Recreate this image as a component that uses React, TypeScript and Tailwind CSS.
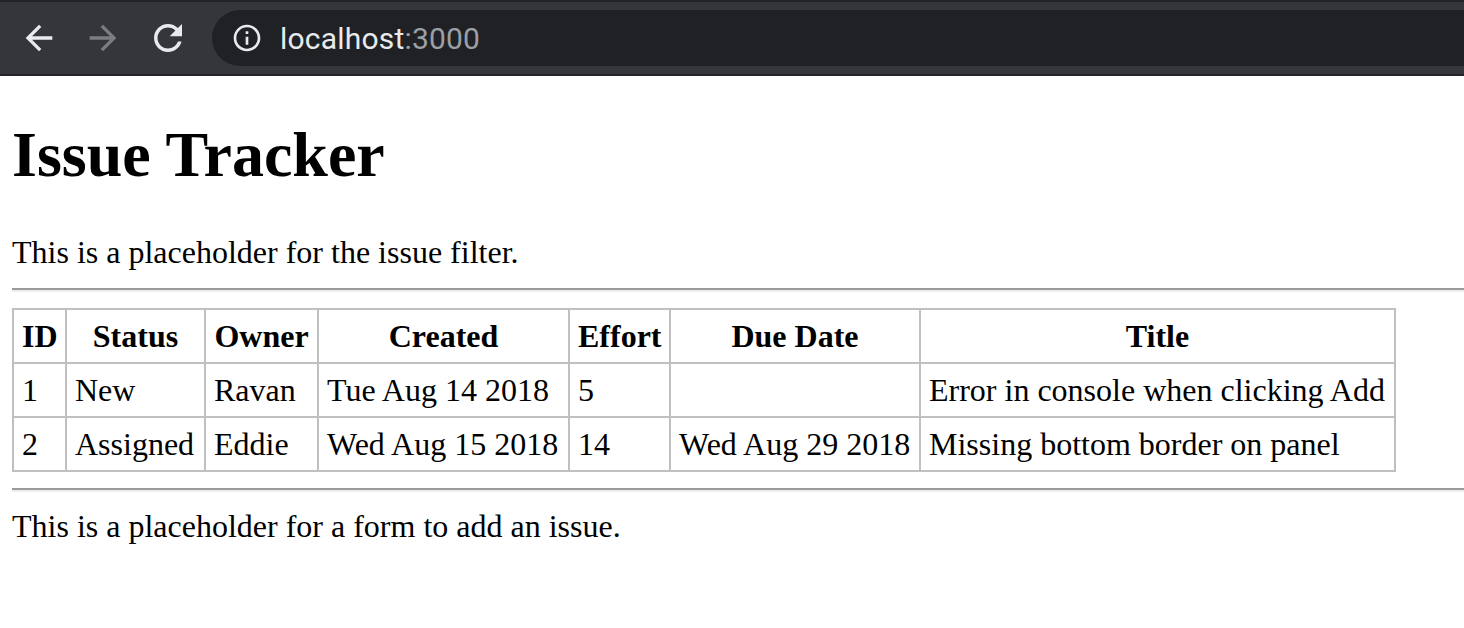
import React from "react";

const serif = { fontFamily: '"Liberation Serif", "Times New Roman", serif' };

function BackIcon() {
  return (
    <svg width="40" height="40" viewBox="0 0 24 24" className="shrink-0">
      <path fill="#e8eaed" d="M20 11H7.83l5.59-5.59L12 4l-8 8 8 8 1.41-1.41L7.83 13H20v-2z" />
    </svg>
  );
}
function ForwardIcon() {
  return (
    <svg width="40" height="40" viewBox="0 0 24 24" className="shrink-0">
      <path fill="#7c7d80" d="M12 4l-1.41 1.41L16.17 11H4v2h12.17l-5.58 5.59L12 20l8-8z" />
    </svg>
  );
}
function ReloadIcon() {
  return (
    <svg width="42" height="42" viewBox="0 0 24 24" className="shrink-0">
      <path
        fill="#e8eaed"
        d="M17.65 6.35C16.2 4.9 14.21 4 12 4c-4.42 0-7.99 3.58-7.99 8s3.57 8 7.99 8c3.73 0 6.84-2.55 7.73-6h-2.08c-.82 2.33-3.04 4-5.65 4-3.31 0-6-2.69-6-6s2.69-6 6-6c1.66 0 3.14.69 4.22 1.78L13 11h7V4l-2.35 2.35z"
      />
    </svg>
  );
}
function InfoIcon() {
  return (
    <svg width="32" height="32" viewBox="0 0 24 24" className="shrink-0">
      <path
        fill="#e8eaed"
        d="M11 7h2v2h-2zm0 4h2v6h-2zm1-9C6.48 2 2 6.48 2 12s4.48 10 10 10 10-4.48 10-10S17.52 2 12 2zm0 18c-4.41 0-8-3.59-8-8s3.59-8 8-8 8 3.59 8 8-3.59 8-8 8z"
      />
    </svg>
  );
}

const issues = [
  { id: 1, status: "New", owner: "Ravan", created: "Tue Aug 14 2018", effort: "5", due: "", title: "Error in console when clicking Add" },
  { id: 2, status: "Assigned", owner: "Eddie", created: "Wed Aug 15 2018", effort: "14", due: "Wed Aug 29 2018", title: "Missing bottom border on panel" },
];

const th = "border-2 border-[#c0c0c0] px-[8px] py-[8px] font-bold text-center leading-[36px]";
const td = "border-2 border-[#c0c0c0] px-[8px] py-[8px] text-left leading-[36px] whitespace-nowrap";

export default function App() {
  return (
    <div className="min-h-screen w-full bg-white overflow-hidden">
      <div className="h-[76px] bg-[#35363a] border-t-2 border-b-2 border-[#232427] flex items-center">
        <div className="flex items-center pl-[19px] gap-[24px]">
          <BackIcon />
          <ForwardIcon />
          <ReloadIcon />
        </div>
        <div className="ml-[23px] flex-1 h-[56px] rounded-l-[28px] bg-[#202124] flex items-center pl-[19px]">
          <InfoIcon />
          <span
            className="ml-[17px] text-[30px] text-[#e8eaed] tracking-[0.2px]"
            style={{ fontFamily: 'Roboto, "Noto Sans", sans-serif' }}
          >
            localhost<span className="text-[#9aa0a6]">:3000</span>
          </span>
        </div>
      </div>

      <div className="pl-[12px] text-black text-[32px] leading-[37px]" style={serif}>
        <h1 className="mt-[42px] text-[64px] leading-[74px] font-bold">Issue Tracker</h1>
        <div className="mt-[42px]">This is a placeholder for the issue filter.</div>
        <hr className="mt-[17px] h-0 border-0 border-t-2 border-b-2 border-t-[#9a9a9a] border-b-[#eeeeee]" />
        <table className="mt-[16px] border-collapse border-2 border-[#c0c0c0] table-fixed w-[1382px]">
          <colgroup>
            <col className="w-[53px]" />
            <col className="w-[139px]" />
            <col className="w-[113px]" />
            <col className="w-[251px]" />
            <col className="w-[101px]" />
            <col className="w-[250px]" />
            <col className="w-[475px]" />
          </colgroup>
          <thead>
            <tr>
              <th className={th}>ID</th>
              <th className={th}>Status</th>
              <th className={th}>Owner</th>
              <th className={th}>Created</th>
              <th className={th}>Effort</th>
              <th className={th}>Due Date</th>
              <th className={th}>Title</th>
            </tr>
          </thead>
          <tbody>
            {issues.map((i) => (
              <tr key={i.id}>
                <td className={td}>{i.id}</td>
                <td className={td}>{i.status}</td>
                <td className={td}>{i.owner}</td>
                <td className={td}>{i.created}</td>
                <td className={td}>{i.effort}</td>
                <td className={td}>{i.due}</td>
                <td className={td}>{i.title}</td>
              </tr>
            ))}
          </tbody>
        </table>
        <hr className="mt-[16px] h-0 border-0 border-t-2 border-b-2 border-t-[#9a9a9a] border-b-[#eeeeee]" />
        <div className="mt-[16px]">This is a placeholder for a form to add an issue.</div>
      </div>
    </div>
  );
}
